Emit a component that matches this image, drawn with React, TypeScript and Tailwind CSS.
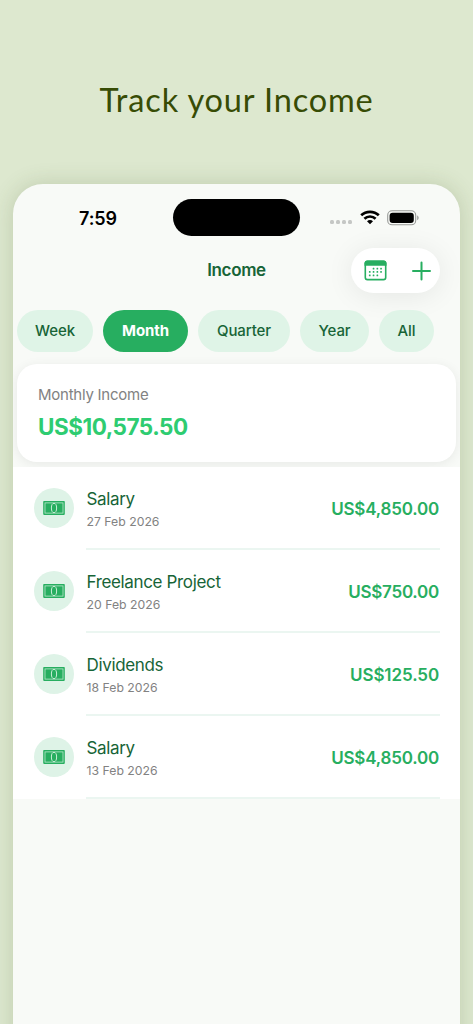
import { useState } from 'react';

type Entry = { id: number; title: string; date: string; amount: string; amountCls: string };

const PERIODS = [
  { label: 'Week', width: 'w-[76px]' },
  { label: 'Month', width: 'w-[85px]' },
  { label: 'Quarter', width: 'w-[92px]' },
  { label: 'Year', width: 'w-[69px]' },
  { label: 'All', width: 'w-[55px]' },
];

const ENTRIES: Entry[] = [
  { id: 1, title: 'Salary', date: '27 Feb 2026', amount: 'US$4,850.00', amountCls: 'tracking-[-0.2px]' },
  { id: 2, title: 'Freelance Project', date: '20 Feb 2026', amount: 'US$750.00', amountCls: 'tracking-[-0.25px]' },
  { id: 3, title: 'Dividends', date: '18 Feb 2026', amount: 'US$125.50', amountCls: 'tracking-[-0.1px]' },
  { id: 4, title: 'Salary', date: '13 Feb 2026', amount: 'US$4,850.00', amountCls: 'tracking-[-0.2px]' },
];

function WifiIcon() {
  return (
    <svg width="20" height="15" viewBox="0 0 20 15" fill="none" stroke="#000" strokeWidth="2.7">
      <path d="M1.2 5.3C6 .6 14 .6 18.8 5.3" />
      <path d="M4.4 8.8c3.2-3.1 8-3.1 11.2 0" />
      <path d="M10 14.2 7 11.3c1.7-1.6 4.3-1.6 6 0z" fill="#000" stroke="none" />
    </svg>
  );
}

function BatteryIcon() {
  return (
    <svg width="33" height="16" viewBox="0 0 33 16">
      <rect x=".7" y=".8" width="28" height="14" rx="4.4" fill="none" stroke="#989a98" strokeWidth="1.1" />
      <rect x="2.6" y="2.7" width="24.2" height="10.2" rx="3" fill="#000" />
      <path d="M30.2 5.5c1.9.7 1.9 4 0 4.7z" fill="#989a98" />
    </svg>
  );
}

function CalendarIcon() {
  const dots = [[9.5, 8.5], [13.3, 8.5], [17, 8.5], [5.7, 11.9], [9.5, 11.9], [13.3, 11.9], [17, 11.9], [5.7, 15.4], [9.5, 15.4], [13.3, 15.4]];
  return (
    <svg width="23" height="21" viewBox="0 0 23 21" fill="#27ae60">
      <rect x="1.3" y="1.2" width="20.4" height="18.4" rx="2.2" fill="none" stroke="#27ae60" strokeWidth="1.6" />
      <path d="M.5 5.8V3.2C.5 1.5 1.7.4 3.3.4h16.4c1.6 0 2.8 1.1 2.8 2.8v2.6z" />
      {dots.map(([x, y]) => <rect key={`${x}-${y}`} x={x - 0.8} y={y - 0.8} width="1.7" height="1.7" rx=".5" />)}
    </svg>
  );
}

function BanknoteIcon() {
  return (
    <svg width="22" height="14" viewBox="0 0 22 14">
      <rect x=".2" y=".1" width="21.6" height="13.8" rx=".8" fill="#27ae60" />
      <rect x="2" y="1.9" width="18" height="10.2" fill="none" stroke="#bce8cd" strokeWidth=".8" />
      <ellipse cx="11" cy="7" rx="2.6" ry="4.6" fill="#27ae60" stroke="#c8edd6" strokeWidth="1" />
    </svg>
  );
}

function StatusBar() {
  return (
    <div className="flex h-[52px] items-end">
      <div className="flex h-[37px] w-[160px] items-center justify-center pt-px pl-[10px]">
        <span className="text-[18px] font-semibold tracking-[-0.1px] text-black">7:59</span>
      </div>
      <div className="h-[37px] w-[127px] rounded-full bg-black" />
      <div className="flex h-[37px] items-center pl-[30px]">
        <div className="mt-[9px] flex gap-[2px]">
          {[0, 1, 2, 3].map((n) => <span key={n} className="size-[4px] rounded-[1.5px] bg-[#c5c7c5]" />)}
        </div>
        <div className="ml-[8px]"><WifiIcon /></div>
        <div className="ml-[7px]"><BatteryIcon /></div>
      </div>
    </div>
  );
}

export default function App() {
  const [period, setPeriod] = useState('Month');

  return (
    <div className="flex h-screen w-full flex-col overflow-hidden bg-[#dde8cf] font-['Inter',sans-serif]">
      <h1 className="flex h-[184px] shrink-0 justify-center pt-[76px] font-['Lato',sans-serif] text-[32.5px] leading-[48px] tracking-[0.85px] text-[#374c05]">
        Track your Income
      </h1>
      <main className="mx-[13px] h-[900px] shrink-0 rounded-t-[30px] bg-[#f8faf7] shadow-[0_0_22px_rgba(70,90,40,0.2)]">
        <StatusBar />
        <div className="mt-[12px] grid h-[45px] grid-cols-[1fr_auto_1fr] items-center px-5">
          <span />
          <h2 className="pt-px text-[17px] font-semibold tracking-[-0.35px] text-[#176437]">Income</h2>
          <div className="flex h-[45px] w-[89px] items-center justify-self-end rounded-full bg-white pl-[13px] shadow-[0_3px_28px_rgba(0,0,0,0.08)]">
            <button aria-label="Calendar"><CalendarIcon /></button>
            <button aria-label="Add" className="ml-[25px]">
              <svg width="20" height="20" viewBox="0 0 20 20" stroke="#27ae60" strokeWidth="2" strokeLinecap="round"><path d="M9.5 1.5v17M1 10h17" /></svg>
            </button>
          </div>
        </div>
        <div className="mt-[17px] flex gap-[10px] pl-1">
          {PERIODS.map((p) => (
            <button key={p.label} onClick={() => setPeriod(p.label)}
              className={`h-[42px] rounded-[21px] text-[15px] tracking-[-0.1px] ${p.width} ${period === p.label
                ? 'bg-[#27ae60] font-bold text-white'
                : 'bg-[#dff4e7] font-medium text-[#176437]'}`}>{p.label}</button>
          ))}
        </div>
        <div className="h-[115px] overflow-hidden px-1 pt-[12px]">
          <section className="h-[98px] rounded-[20px] bg-white px-[21px] pt-[20px] shadow-[0_2px_12px_rgba(0,0,0,0.07)]">
            <p className="text-[15px] leading-[22px] tracking-[-0.25px] text-[#828282]">Monthly Income</p>
            <p className="mt-[5px] text-[22.5px] leading-[32px] font-bold tracking-[-0.5px] text-[#2ecc71]">US$10,575.50</p>
          </section>
        </div>
        <ul className="h-[332px] bg-white">
          {ENTRIES.map((e) => (
            <li key={e.id} className="flex h-[83px] pl-[21px] pr-5">
              <span className="mt-[21px] flex size-[40px] items-center justify-center rounded-full bg-[#def3e7]"><BanknoteIcon /></span>
              <div className="ml-3 flex h-[83px] flex-1 justify-between border-b-2 border-[#ebf6f1]">
                <div className="pt-[20px] pl-[0.5px]">
                  <p className="text-[17px] leading-[24px] tracking-[-0.35px] text-[#176437]">{e.title}</p>
                  <p className="mt-[2px] text-[12.25px] leading-[18px] text-[#828282]">{e.date}</p>
                </div>
                <p className={`pt-[30px] pr-px text-[17px] leading-[24px] font-semibold text-[#27ae60] ${e.amountCls}`}>{e.amount}</p>
              </div>
            </li>
          ))}
        </ul>
      </main>
    </div>
  );
}
